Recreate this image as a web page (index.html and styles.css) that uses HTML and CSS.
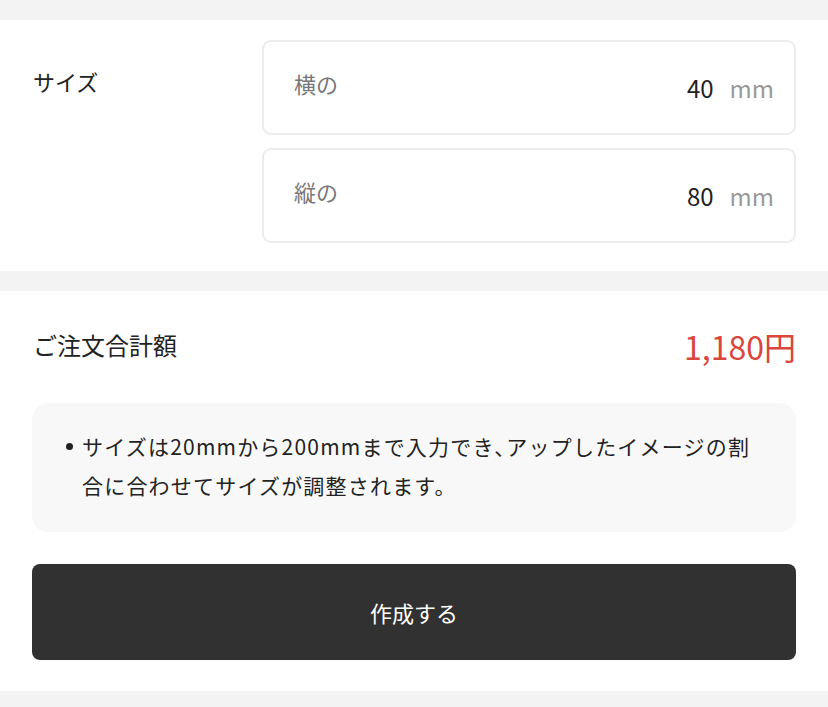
FILE: index.html
```html
<!DOCTYPE html>
<html lang="ja">
<head>
<meta charset="UTF-8">
<meta name="viewport" content="width=device-width, initial-scale=1.0">
<title>サイズ入力</title>
<link rel="stylesheet" href="styles.css">
</head>
<body>

<div class="section size-section">
  <div class="size-label">サイズ</div>
  <div class="size-fields">
    <div class="field">
      <span class="field-name">横の</span>
      <span class="field-value">40</span>
      <span class="field-unit">mm</span>
    </div>
    <div class="field">
      <span class="field-name">縦の</span>
      <span class="field-value">80</span>
      <span class="field-unit">mm</span>
    </div>
  </div>
</div>

<div class="section order-section">
  <div class="total-row">
    <span class="total-label">ご注文合計額</span>
    <span class="total-price">1,180円</span>
  </div>
  <div class="notice">
    <ul>
      <li>サイズは20mmから200mmまで入力でき､アップしたイメージの割合に合わせてサイズが調整されます。</li>
    </ul>
  </div>
  <button class="create-btn">作成する</button>
</div>

</body>
</html>
```

FILE: styles.css
```css
body {
  margin: 0;
  padding: 0;
  background: #f3f3f3;
  font-family: "Noto Sans CJK JP", "Noto Sans", sans-serif;
  color: #222;
}
.section {
  background: #fff;
  margin-top: 20px;
}
.size-section {
  display: flex;
  padding: 20px 32px 28px 33px;
}
.size-label {
  width: 229px;
  font-size: 22px;
  line-height: 32px;
  padding-top: 25px;
}
.size-fields {
  flex: 1;
  display: flex;
  flex-direction: column;
  gap: 13px;
}
.field {
  height: 95px;
  box-sizing: border-box;
  border: 2px solid #ececec;
  border-radius: 9px;
  display: flex;
  align-items: center;
  padding: 0 20px 0 30px;
}
.field-name {
  flex: 1;
  font-size: 22px;
  color: #777;
  margin-top: -10px;
}
.field-value {
  font-size: 24px;
  color: #222;
}
.field-unit {
  font-size: 24px;
  color: #999;
  margin-left: 16px;
}
.order-section {
  padding: 30px 32px 31px;
  margin-bottom: 16px;
}
.total-row {
  display: flex;
  justify-content: space-between;
  align-items: center;
  padding: 0 0 0 1px;
  height: 50px;
}
.total-label {
  font-size: 24px;
  margin-top: -4px;
}
.total-price {
  font-size: 32px;
  color: #d9463b;
}
.notice {
  margin-top: 32px;
  background: #f8f8f8;
  border-radius: 16px;
  padding: 24px 34px 27px 50px;
}
.notice ul {
  margin: 0;
  padding: 0;
  list-style: none;
}
.notice li {
  position: relative;
  font-size: 21px;
  line-height: 39px;
  letter-spacing: 1.2px;
  color: #222;
}
.notice li::before {
  content: "";
  position: absolute;
  left: -16px;
  top: 16px;
  width: 7px;
  height: 7px;
  border-radius: 50%;
  background: #222;
}
.create-btn {
  display: block;
  width: 100%;
  height: 96px;
  margin-top: 32px;
  border: none;
  border-radius: 8px;
  background: #313131;
  color: #fff;
  font-family: inherit;
  font-size: 22px;
}
```
